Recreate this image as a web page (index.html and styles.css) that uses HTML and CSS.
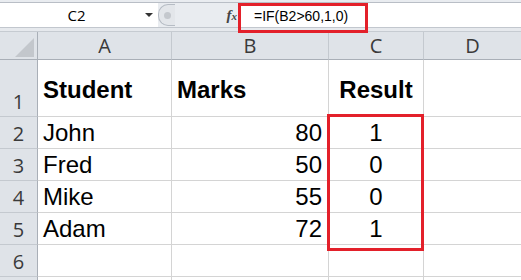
FILE: index.html
```html
<!DOCTYPE html>
<html lang="en">
<head>
  <meta charset="UTF-8">
  <title>IF formula example</title>
  <link rel="stylesheet" href="styles.css">
</head>
<body>

  <div class="ribbon-edge"></div>

  <!-- Formula bar -->
  <div class="formula-bar">
    <div class="name-box">
      <span class="cell-ref">C2</span>
      <span class="drop-arrow"></span>
    </div>
    <div class="splitter"><span class="grip"></span></div>
    <span class="fx">f<small>x</small></span>
    <div class="formula-input">=IF(B2&gt;60,1,0)</div>
  </div>
  <div class="bar-gap"></div>

  <div class="sheet">
    <div class="corner">
      <svg width="38" height="28" viewBox="0 0 38 28"><polygon points="15,25 34,25 34,6" fill="#c3c7cc"/></svg>
    </div>
    <div class="col-head">A</div>
    <div class="col-head">B</div>
    <div class="col-head">C</div>
    <div class="col-head">D</div>

    <div class="row-head">1</div>
    <div class="cell title">Student</div>
    <div class="cell title">Marks</div>
    <div class="cell title center">Result</div>
    <div class="cell"></div>

    <div class="row-head">2</div>
    <div class="cell">John</div>
    <div class="cell num">80</div>
    <div class="cell center">1</div>
    <div class="cell"></div>

    <div class="row-head">3</div>
    <div class="cell">Fred</div>
    <div class="cell num">50</div>
    <div class="cell center">0</div>
    <div class="cell"></div>

    <div class="row-head">4</div>
    <div class="cell">Mike</div>
    <div class="cell num">55</div>
    <div class="cell center">0</div>
    <div class="cell"></div>

    <div class="row-head">5</div>
    <div class="cell">Adam</div>
    <div class="cell num">72</div>
    <div class="cell center">1</div>
    <div class="cell"></div>

    <div class="row-head">6</div>
    <div class="cell"></div>
    <div class="cell"></div>
    <div class="cell"></div>
    <div class="cell"></div>

    <div class="row-head"></div>
    <div class="cell"></div>
    <div class="cell"></div>
    <div class="cell"></div>
    <div class="cell"></div>
  </div>

  <!-- Red highlight boxes -->
  <div class="mark mark-formula"></div>
  <div class="mark mark-results"></div>

</body>
</html>
```

FILE: styles.css
```css
body {
  margin: 0;
  padding: 0;
  width: 521px;
  height: 280px;
  overflow: hidden;
  background: #fff;
  font-family: 'Liberation Sans', Arial, sans-serif;
  position: relative;
}
.ribbon-edge {
  height: 2px;
  background: #e9ecf0;
  border-bottom: 1px solid #b9bec6;
}

/* Formula bar */
.formula-bar {
  display: flex;
  align-items: center;
  height: 24px;
  background: #e9ecf0;
  border-bottom: 1px solid #c2c7ce;
}
.name-box {
  width: 158px;
  height: 24px;
  background: #fff;
  display: flex;
  align-items: center;
}
.cell-ref {
  flex: 1;
  text-align: center;
  font-family: 'Open Sans', sans-serif;
  font-size: 15px;
  color: #000;
  padding-left: 8px;
}
.drop-arrow {
  width: 0;
  height: 0;
  border-left: 4px solid transparent;
  border-right: 4px solid transparent;
  border-top: 4px solid #333;
  margin-right: 5px;
}
.splitter {
  width: 16px;
  height: 20px;
  border: 1px solid #b6bcc4;
  border-right: none;
  border-radius: 10px 0 0 10px;
  background: #e3e6ea;
  display: flex;
  align-items: center;
  justify-content: center;
}
.grip {
  width: 7px;
  height: 7px;
  border-radius: 50%;
  background: #c4c8cd;
}
.fx {
  margin-left: auto;
  margin-right: 3px;
  font-family: 'Liberation Serif', serif;
  font-style: italic;
  font-weight: bold;
  font-size: 15px;
  color: #444;
}
.fx small {
  font-size: 11px;
}
.formula-input {
  width: 281px;
  height: 24px;
  box-sizing: border-box;
  background: #fff;
  border-left: 1px solid #c2c7ce;
  padding-left: 13px;
  font-size: 14px;
  line-height: 27px;
  color: #000;
}
.bar-gap {
  height: 3px;
  background: #e6e9ed;
  border-bottom: 1px solid #c6cbd1;
}

/* Sheet grid */
.sheet {
  display: grid;
  grid-template-columns: 38px 134px 157px 95px 98px;
  grid-template-rows: 28px 57px 32px 32px 32px 32px 32px 32px;
}
.sheet > div {
  box-sizing: border-box;
}
.corner {
  background: #dfe3e8;
  border-right: 1px solid #a9afb7;
  border-bottom: 1px solid #a9afb7;
}
.corner svg {
  display: block;
}
.col-head {
  background: #dfe3e8;
  border-right: 1px solid #c4c9cf;
  border-bottom: 1px solid #a9afb7;
  font-family: 'Open Sans', sans-serif;
  font-size: 20px;
  color: #3a3a3a;
  text-align: center;
  line-height: 28px;
}
.row-head {
  background: #dfe3e8;
  border-right: 1px solid #a9afb7;
  border-bottom: 1px solid #c4c9cf;
  font-family: 'Open Sans', sans-serif;
  font-size: 20px;
  color: #3a3a3a;
  display: flex;
  align-items: flex-end;
  justify-content: center;
  line-height: 26px;
  padding-bottom: 1px;
}
.cell {
  border-right: 1px solid #d4d4d4;
  border-bottom: 1px solid #d4d4d4;
  font-size: 24px;
  line-height: 26px;
  color: #000;
  display: flex;
  align-items: flex-end;
  padding: 0 0 2px 5px;
}
.cell.title {
  font-weight: bold;
  padding-bottom: 13px;
}
.num {
  justify-content: flex-end;
  padding: 0 6px 2px 0;
}
.center {
  justify-content: center;
  padding-left: 0;
}

/* Red highlight overlays */
.mark {
  position: absolute;
  border: 3px solid #e3202a;
  box-sizing: border-box;
}
.mark-formula {
  left: 238px;
  top: 3px;
  width: 130px;
  height: 30px;
}
.mark-results {
  left: 327px;
  top: 114px;
  width: 97px;
  height: 137px;
}
```
